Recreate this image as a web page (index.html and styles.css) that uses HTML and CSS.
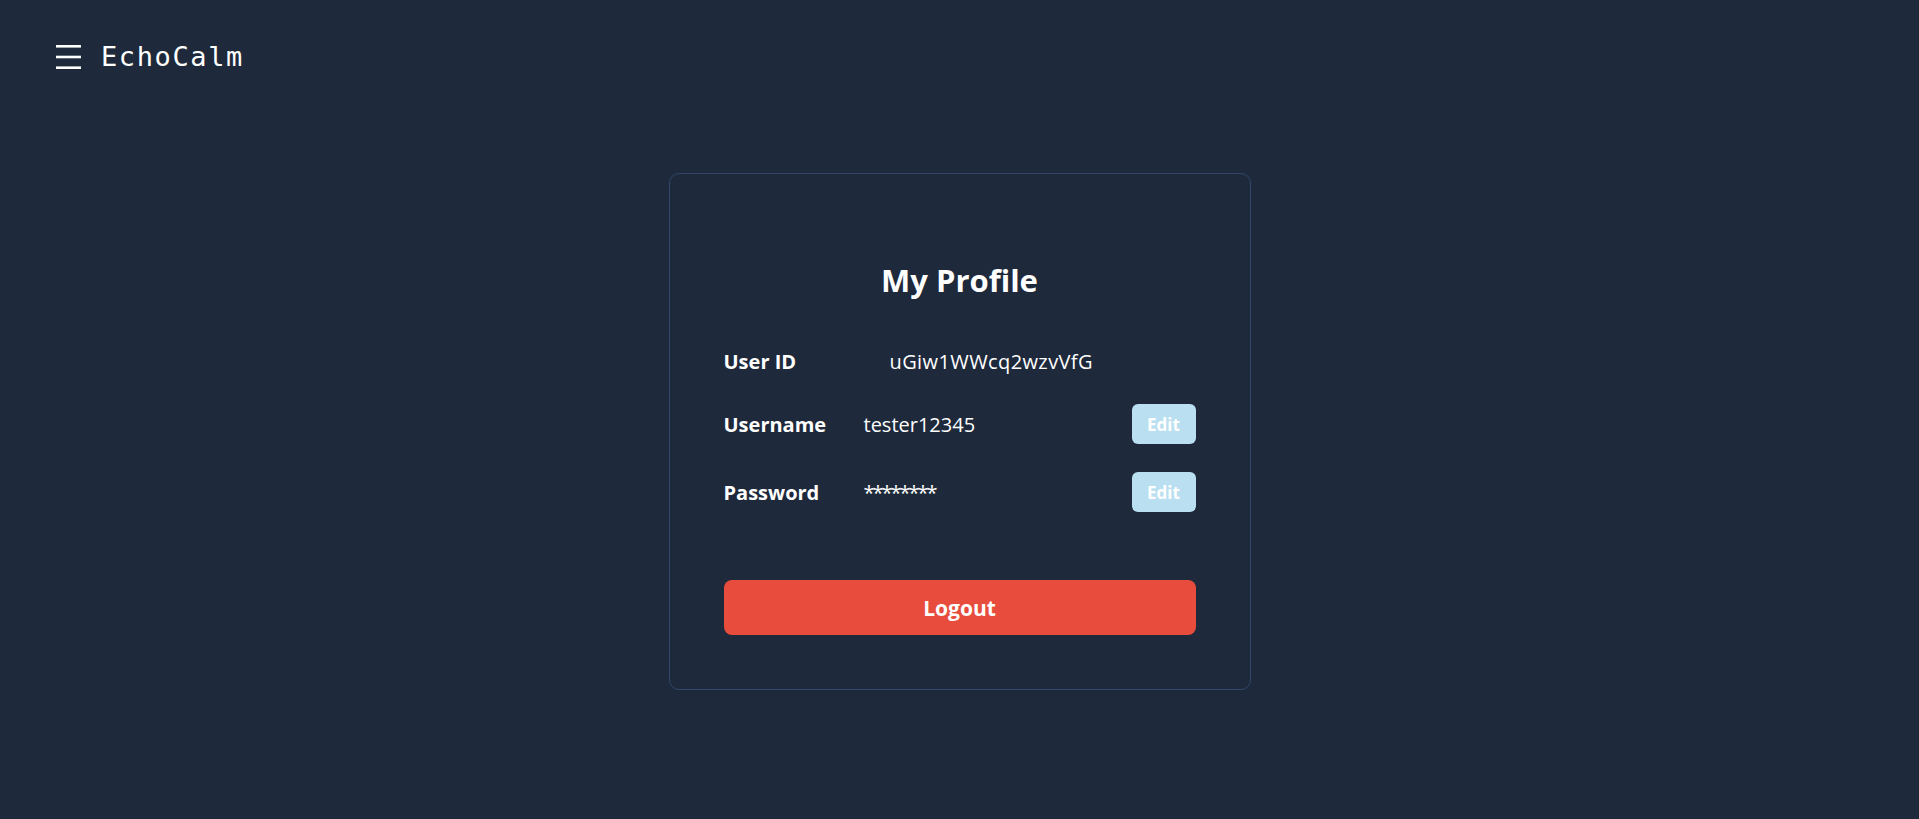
FILE: index.html
```html
<!DOCTYPE html>
<html lang="en">
<head>
<meta charset="utf-8">
<title>EchoCalm - My Profile</title>
<link rel="stylesheet" href="styles.css">
</head>
<body>
<header class="topbar">
  <button class="menu-btn" aria-label="Menu">
    <svg width="25" height="24" viewBox="0 0 25 24"><rect x="0" y="0" width="25" height="2.6" fill="#fff"/><rect x="0" y="10.7" width="25" height="2.6" fill="#fff"/><rect x="0" y="21.4" width="25" height="2.6" fill="#fff"/></svg>
  </button>
  <span class="brand">EchoCalm</span>
</header>
<main class="page">
  <section class="card">
    <h2 class="card-title">My Profile</h2>
    <div class="rows">
      <div class="row row-id">
        <span class="label">User ID</span>
        <span class="value value-id">uGiw1WWcq2wzvVfG</span>
      </div>
      <div class="row">
        <span class="label">Username</span>
        <span class="value">tester12345</span>
        <button class="edit-btn">Edit</button>
      </div>
      <div class="row">
        <span class="label">Password</span>
        <span class="value value-mask">********</span>
        <button class="edit-btn">Edit</button>
      </div>
    </div>
    <button class="logout-btn">Logout</button>
  </section>
</main>
</body>
</html>
```

FILE: styles.css
```css
* { box-sizing: border-box; }
html, body { margin: 0; padding: 0; }
body {
  background: #1e293b;
  color: #ffffff;
  font-family: "Open Sans", "Noto Sans", sans-serif;
  min-height: 819px;
}
.topbar {
  display: flex;
  align-items: flex-start;
  gap: 20px;
  padding: 42px 56px 0;
  height: 93px;
}
.menu-btn {
  background: none;
  border: 0;
  padding: 0;
  margin-top: 3px;
  width: 25px;
  height: 24px;
  display: block;
  cursor: pointer;
}
.menu-btn svg { display: block; }
.brand {
  font-family: "DejaVu Sans Mono", "Liberation Mono", monospace;
  font-size: 27px;
  letter-spacing: 1.6px;
  line-height: 30px;
  color: #fff;
}
.page {
  display: flex;
  justify-content: center;
  padding-top: 80px;
}
.card {
  width: 582px;
  border: 1px solid #33456a;
  border-radius: 10px;
  padding: 54px;
  background: #1e293b;
}
.card-title {
  margin: 32px 0 0;
  text-align: center;
  font-size: 31px;
  font-weight: 700;
  line-height: 40px;
}
.rows {
  display: flex;
  flex-direction: column;
  gap: 28px;
  margin-top: 46px;
}
.row {
  display: flex;
  align-items: center;
  min-height: 30px;
  font-size: 20px;
}
.label {
  width: 140px;
  font-weight: 700;
  flex: none;
}
.value {
  flex: 1;
  font-weight: 400;
}
.value-id { padding-left: 26px; letter-spacing: 0.4px; }
.value-mask { letter-spacing: -2px; }
.edit-btn {
  width: 64px;
  height: 40px;
  border: 0;
  border-radius: 6px;
  background: #badff1;
  color: #fff;
  font-family: inherit;
  font-weight: 700;
  font-size: 17px;
  cursor: pointer;
}
.logout-btn {
  display: block;
  width: 100%;
  height: 55px;
  margin-top: 68px;
  border: 0;
  border-radius: 8px;
  background: #e74c3c;
  color: #fff;
  font-family: inherit;
  font-size: 21px;
  font-weight: 700;
  cursor: pointer;
}
```
